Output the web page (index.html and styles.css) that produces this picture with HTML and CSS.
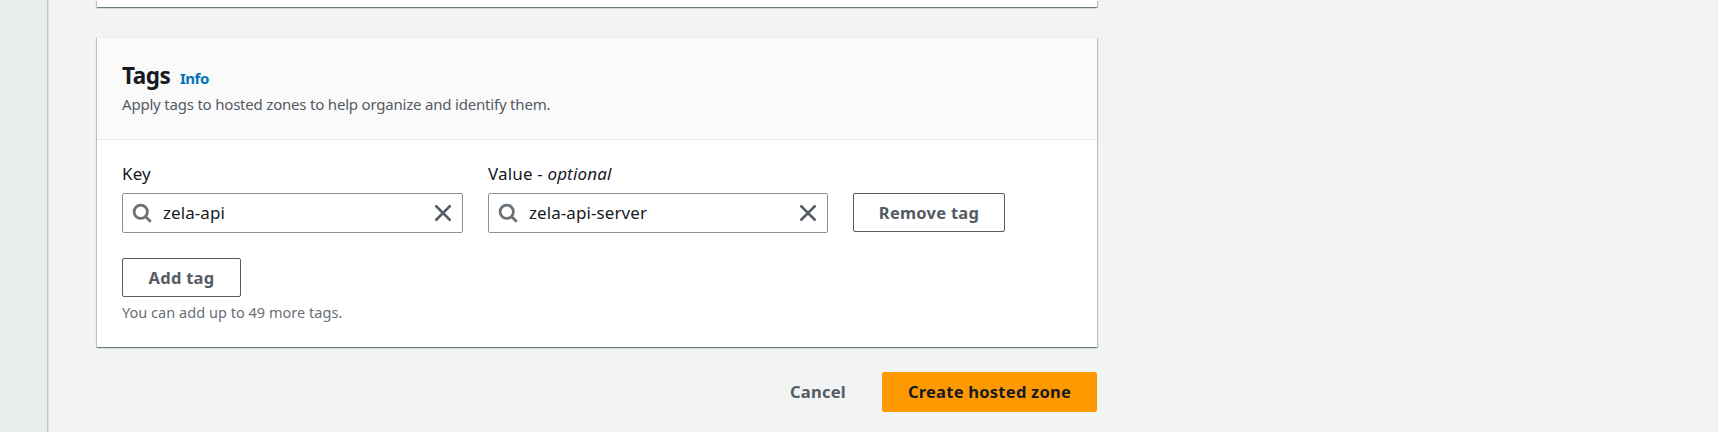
FILE: index.html
```html
<!DOCTYPE html>
<html lang="en">
<head>
<meta charset="utf-8">
<title>Create hosted zone</title>
<link rel="stylesheet" href="styles.css">
</head>
<body>
<div class="layout">
  <aside class="side"></aside>
  <main class="main">
    <section class="card card-previous"></section>
    <section class="card">
      <header class="card-header">
        <div class="heading"><h2 class="title"><span class="t">Tags</span></h2><a class="info"><span class="t">Info</span></a></div>
        <p class="description"><span class="t">Apply tags to hosted zones to help organize and identify them.</span></p>
      </header>
      <div class="card-body">
        <div class="tag-row">
          <div class="field">
            <label class="label label-key"><span class="t">Key</span></label>
            <div class="input">
              <svg class="icon search" viewBox="0 0 16 16"><circle cx="7" cy="7" r="5.3"/><path d="M10.8 10.8l4.2 4.2"/></svg>
              <span class="value value-key"><span class="t">zela-api</span></span>
              <svg class="icon close" viewBox="0 0 16 16"><path d="M2 2l12 12M14 2L2 14"/></svg>
            </div>
          </div>
          <div class="field field-value">
            <label class="label label-value"><span class="t">Value - <em>optional</em></span></label>
            <div class="input">
              <svg class="icon search" viewBox="0 0 16 16"><circle cx="7" cy="7" r="5.3"/><path d="M10.8 10.8l4.2 4.2"/></svg>
              <span class="value value-server"><span class="t">zela-api-server</span></span>
              <svg class="icon close" viewBox="0 0 16 16"><path d="M2 2l12 12M14 2L2 14"/></svg>
            </div>
          </div>
          <button class="button remove"><span class="t">Remove tag</span></button>
        </div>
        <button class="button add"><span class="t">Add tag</span></button>
        <p class="hint"><span class="t">You can add up to 49 more tags.</span></p>
      </div>
    </section>
    <footer class="actions">
      <button class="link"><span class="t">Cancel</span></button>
      <button class="button primary"><span class="t">Create hosted zone</span></button>
    </footer>
  </main>
</div>
</body>
</html>
```
FILE: styles.css
```css
* { box-sizing: border-box; }
body {
  margin: 0;
  background: #f2f3f3;
  color: #16191f;
  font-family: "Noto Sans", "Open Sans", sans-serif;
  font-size: 17px;
  overflow: hidden;
}
h2, p { margin: 0; font-weight: 400; }
.t { white-space: nowrap; }
.layout { display: flex; height: 432px; }
.side { width: 48px; flex: none; background: #e9eded; border-right: 1px solid #c4c8c9; box-shadow: 1px 0 1px rgba(0, 28, 36, 0.08); }
.main { width: 1049px; flex: none; padding-left: 49px; }
.card {
  height: 310px;
  background: #fff;
  box-shadow: 0 1px 1px 0 rgba(0, 28, 36, 0.35), 1px 1px 1px 0 rgba(0, 28, 36, 0.18), -1px 1px 1px 0 rgba(0, 28, 36, 0.18);
}
.card-previous { height: 7px; margin-bottom: 30px; }
.card-header {
  height: 103px;
  padding: 24px 25px 0;
  background: #fafafa;
  border-top: 1px solid #eaeded;
  border-bottom: 1px solid #eaeded;
}
.heading { display: flex; align-items: baseline; height: 28px; line-height: 28px; gap: 9px; }
.title { width: 49px; font-size: 22.5px; font-weight: 700; letter-spacing: -0.5px; }
.info { color: #0073bb; font-size: 15px; font-weight: 700; letter-spacing: -0.5px; }
.description { margin-top: 1px; height: 27px; line-height: 27px; color: #545b64; font-size: 15px; letter-spacing: -0.2px; }
.card-body { padding: 20px 25px 0; }
.tag-row { display: flex; gap: 25px; align-items: flex-end; }
.field { width: 341px; }
.field-value { width: 340px; }
.label { display: block; height: 28px; line-height: 28px; margin-bottom: 5px; font-size: 17px; letter-spacing: 0.15px; }
.input { display: flex; align-items: center; height: 40px; border: 1px solid #879596; border-radius: 2px; padding: 0 9px; }
.icon { width: 20px; height: 20px; fill: none; stroke: #545b64; stroke-width: 2; flex: none; }
.search { stroke: #687078; stroke-width: 2.2; }
.value { flex: 1; margin-left: 11px; line-height: 26px; font-size: 17px; letter-spacing: 0.08px; }
.button { height: 39px; padding: 0; display: flex; align-items: center; justify-content: center; border: 1px solid #545b64; border-radius: 2px; background: #fff; color: #545b64; font: 700 16.5px "Noto Sans", sans-serif; letter-spacing: 0.25px; }
.remove { width: 152px; margin-bottom: 1px; }
.add { width: 119px; margin-top: 25px; }
.hint { margin-top: 4px; height: 22px; line-height: 22px; font-size: 14.5px; letter-spacing: 0.03px; color: #687078; }
.actions { display: flex; justify-content: flex-end; align-items: center; margin-top: 25px; }
.link { padding: 0 0 1px; border: 0; background: none; margin-right: 36px; color: #545b64; font: 700 16.5px "Noto Sans", sans-serif; letter-spacing: 0.25px; }
.primary { width: 215px; height: 40px; padding-bottom: 1px; background: #ff9900; border-color: #ff9900; color: #16191f; }
```
